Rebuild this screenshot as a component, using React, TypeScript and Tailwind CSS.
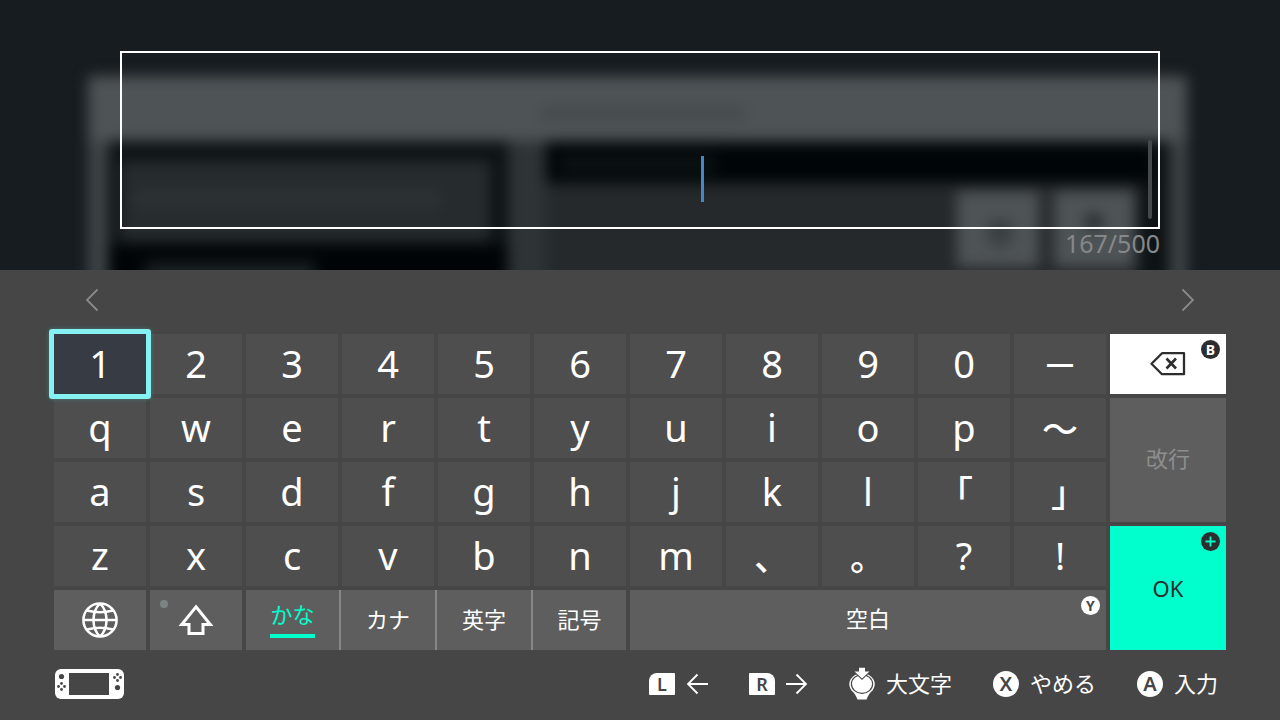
import type { ReactNode } from 'react';

interface KeyDef {
  label: string;
  wide?: boolean;
  bracket?: boolean;
}

const wide = (label: string): KeyDef => ({ label, wide: true });
const bracket = (label: string): KeyDef => ({ label, wide: true, bracket: true });
const plain = (chars: string): KeyDef[] => [...chars].map((label) => ({ label }));

const ROWS: KeyDef[][] = [
  [...plain('1234567890'), wide('－')],
  [...plain('qwertyuiop'), wide('～')],
  [...plain('asdfghjkl'), bracket('「'), bracket('」')],
  [...plain('zxcvbnm'), wide('、'), wide('。'), ...plain('?!')],
];

const MODES = ['かな', 'カナ', '英字', '記号'];

export default function App() {
  return (
    <div className="flex min-h-screen flex-col bg-[#464646] font-['Noto_Sans','Noto_Sans_CJK_JP',sans-serif] text-white">
      <TextArea />
      <Candidates />
      <Keyboard />
      <Footer />
    </div>
  );
}

function TextArea() {
  return (
    <header className="relative h-[270px] overflow-hidden bg-[#171c20] px-[120px] pt-[51px]">
      <Backdrop />
      <div className="relative">
        <textarea
          aria-label="テキスト"
          className="block h-[178px] w-full resize-none border-2 border-white bg-transparent p-4 text-[32px] caret-transparent outline-none"
        />
        <span className="absolute top-[105px] left-[581px] h-[46px] w-[3px] bg-[#4489c4]" />
        <span className="absolute top-[89px] right-2 h-[79px] w-1 rounded-full bg-[#46494b]" />
        <p className="text-right text-[25px] leading-7 text-[#85888a]">167/500</p>
      </div>
    </header>
  );
}

// Dimmed, out-of-focus screen behind the input box
function Backdrop() {
  return (
    <svg
      className="absolute inset-0 h-full w-full"
      viewBox="0 0 1280 270"
      preserveAspectRatio="none"
      aria-hidden="true"
    >
      <defs>
        <filter id="soft" x="-10%" y="-10%" width="120%" height="120%" colorInterpolationFilters="sRGB">
          <feGaussianBlur stdDeviation="7" />
        </filter>
      </defs>
      <g filter="url(#soft)">
        <rect x="88" y="76" width="1099" height="240" fill="#404548" />
        <rect x="88" y="76" width="1099" height="66" rx="4" fill="#4e5356" />
        <rect x="540" y="106" width="205" height="15" fill="#464b4e" />
        <rect x="108" y="141" width="1062" height="170" fill="#0d1215" />
        <rect x="120" y="161" width="370" height="80" fill="#262b2e" />
        <rect x="134" y="188" width="306" height="22" fill="#2c3134" />
        <rect x="108" y="245" width="400" height="60" fill="#000407" />
        <rect x="145" y="262" width="170" height="20" fill="#1b2023" />
        <rect x="508" y="141" width="38" height="170" fill="#2e3336" />
        <rect x="546" y="143" width="606" height="40" fill="#000508" />
        <rect x="560" y="154" width="155" height="20" fill="#0b1013" />
        <rect x="546" y="183" width="594" height="120" fill="#25292c" />
        <rect x="957" y="191" width="82" height="76" fill="#4e5356" />
        <rect x="1054" y="191" width="80" height="76" fill="#4e5356" />
        <circle cx="1000" cy="233" r="14" fill="#3a3f42" />
        <circle cx="1094" cy="222" r="9" fill="#262b2e" />
      </g>
    </svg>
  );
}

function Candidates() {
  return (
    <div className="flex h-16 items-start justify-between px-[82px] pt-[18px] text-[#8a8a8a]">
      <button type="button" aria-label="前の候補">
        <svg width="20" height="24" viewBox="0 0 20 24" fill="none" stroke="currentColor" strokeWidth="1.800">
          <path d="M15.500 1.500 5 12 15.500 22.500" />
        </svg>
      </button>
      <button type="button" aria-label="次の候補">
        <svg width="20" height="24" viewBox="0 0 20 24" fill="none" stroke="currentColor" strokeWidth="1.800">
          <path d="M4.500 1.500 15 12 4.500 22.500" />
        </svg>
      </button>
    </div>
  );
}

function Keyboard() {
  return (
    <main className="grid grid-cols-[repeat(11,92fr)_116fr] grid-rows-[repeat(5,60px)] gap-1 px-[54px]">
      {ROWS.map((row, i) => (
        <div key={i} className="col-span-11 col-start-1 grid grid-cols-subgrid">
          {row.map((k) => (
            <CharKey key={k.label} def={k} selected={k.label === '1'} />
          ))}
        </div>
      ))}

      <button
        type="button"
        aria-label="削除"
        className="relative col-start-12 row-start-1 flex items-center justify-center bg-white text-[#2d2d2d]"
      >
        <svg width="36" height="24" viewBox="0 0 36 24" fill="none" stroke="currentColor" strokeWidth="2.300" strokeLinejoin="round">
          <path d="M12 1.200H34V22.200H12L1.500 11.700Z" />
          <path d="M16.500 6.500 26 16.500M26 6.500 16.500 16.500" strokeWidth="2.600" />
        </svg>
        <Badge className="bg-[#2d2d2d] text-white">B</Badge>
      </button>
      <button
        type="button"
        disabled
        className="col-start-12 row-span-2 row-start-2 bg-[#5e5e5e] pb-[3px] text-[22px] text-[#8e8e8e]"
      >
        改行
      </button>
      <button
        type="button"
        className="relative col-start-12 row-span-2 row-start-4 bg-[#00ffcc] text-[22px] text-[#2d2d2d]"
      >
        OK
        <Badge className="bg-[#2d2d2d] text-[#00ffcc]">
          <svg width="11" height="11" viewBox="0 0 11 11" stroke="currentColor" strokeWidth="1.800">
            <path d="M5.500 .5V10.500M.5 5.500H10.500" />
          </svg>
        </Badge>
      </button>

      <button
        type="button"
        aria-label="言語"
        className="col-start-1 row-start-5 flex items-center justify-center bg-[#5e5e5e]"
      >
        <GlobeIcon />
      </button>
      <button
        type="button"
        aria-label="シフト"
        className="relative col-start-2 row-start-5 flex items-center justify-center bg-[#5e5e5e]"
      >
        <span className="absolute top-[10px] left-[10px] size-2 rounded-full bg-[#7a8583]" />
        <svg width="36" height="32" viewBox="0 0 36 32" fill="none" stroke="currentColor" strokeWidth="3">
          <path d="M18 2.800 32.300 20.500H25V29.500H11V20.500H3.700Z" />
        </svg>
      </button>
      <div className="col-span-4 col-start-3 row-start-5 grid grid-cols-[95fr_96fr_96fr_93fr] bg-[#5e5e5e]">
        {MODES.map((mode, i) => (
          <button
            key={mode}
            type="button"
            className={`flex items-center justify-center text-[22px] leading-6 ${
              i < MODES.length - 1 ? 'border-r-2 border-[#868686]' : ''
            } ${i > 0 ? 'pb-[3px]' : ''}`}
          >
            {i === 0 ? (
              <span className="border-b-4 border-[#00ffcc] pb-2 text-[#00ffcc]">{mode}</span>
            ) : (
              mode
            )}
          </button>
        ))}
      </div>
      <button
        type="button"
        className="relative col-span-5 col-start-7 row-start-5 bg-[#5e5e5e] pb-[3px] text-[22px]"
      >
        空白
        <Badge className="bg-white text-[#4a4a4a]">Y</Badge>
      </button>
    </main>
  );
}

function CharKey({ def, selected }: { def: KeyDef; selected: boolean }) {
  return (
    <button
      type="button"
      className={`flex items-center justify-center pb-[3px] leading-none ${
        selected ? 'relative z-10 bg-[#373b43]' : 'bg-[#4e4e4e]'
      } ${def.wide ? "font-['Noto_Sans_CJK_JP',sans-serif] text-[36px] font-medium" : 'text-[38px]'} ${
        def.bracket ? "[font-feature-settings:'halt']" : ''
      }`}
    >
      {def.label}
      {selected && (
        <span className="absolute -inset-[5px] rounded-[3px] border-[5px] border-[#84f1f3] shadow-[0_0_5px_#4fb9bd60]" />
      )}
    </button>
  );
}

function Badge({ className, children }: { className: string; children: ReactNode }) {
  return (
    <span
      className={`absolute top-[6px] right-[6px] flex size-[19px] items-center justify-center rounded-full text-[14px] leading-none font-bold ${className}`}
    >
      {children}
    </span>
  );
}

function GlobeIcon() {
  return (
    <svg width="36" height="36" viewBox="0 0 36 36" fill="none" stroke="currentColor" strokeWidth="2.500">
      <circle cx="18" cy="18" r="16.600" />
      <path d="M18 1.300C9.300 10 9.300 26 18 34.700M18 1.300C26.700 10 26.700 26 18 34.700" />
      <path d="M1 18H35M5 8.500Q18 12 31 8.500M5 27.500Q18 24 31 27.500" />
    </svg>
  );
}

function Footer() {
  return (
    <footer className="flex h-[70px] items-center justify-between pr-[62px] pb-[2px] pl-[55px]">
      <svg width="69" height="30" viewBox="0 0 69 30" fill="#464646" role="img" aria-label="コントローラー">
        <rect width="69" height="30" rx="6" fill="#fff" />
        <rect x="14" y="4" width="40" height="22" />
        <circle cx="6.500" cy="7.500" r="2.600" />
        <DotCross x={6.5} y={17.5} />
        <DotCross x={62.5} y={8.5} />
        <circle cx="62.500" cy="18.500" r="2.600" />
      </svg>
      <div className="flex items-center gap-[41px] text-[22px] leading-6">
        <Action icon={<span className={`${SHOULDER} rounded-tl-[8px]`}>L</span>} name="左へ">
          <ArrowIcon d="M22 11H2M11.500 1.500 2 11 11.500 20.500" />
        </Action>
        <Action icon={<span className={`${SHOULDER} rounded-tr-[8px]`}>R</span>} name="右へ">
          <ArrowIcon d="M0 11H20M10.500 1.500 20 11 10.500 20.500" />
        </Action>
        <Action icon={<StickIcon />}>大文字</Action>
        <Action icon={<span className={ROUND}>X</span>}>やめる</Action>
        <Action icon={<span className={ROUND}>A</span>}>入力</Action>
      </div>
    </footer>
  );
}

const SHOULDER =
  'flex h-[22px] w-[26px] items-center justify-center rounded-[1px] bg-white text-[18px] leading-none font-semibold text-[#464646]';
const ROUND =
  'flex size-[26px] items-center justify-center rounded-full bg-white text-[20px] leading-none font-semibold text-[#464646]';

function Action({ icon, name, children }: { icon: ReactNode; name?: string; children: ReactNode }) {
  return (
    <button type="button" aria-label={name} className="flex items-center gap-[11px]">
      {icon}
      {name ? children : <span className="pb-[2px]">{children}</span>}
    </button>
  );
}

function ArrowIcon({ d }: { d: string }) {
  return (
    <svg width="22" height="22" viewBox="0 0 22 22" fill="none" stroke="currentColor" strokeWidth="1.800">
      <path d={d} />
    </svg>
  );
}

function DotCross({ x, y }: { x: number; y: number }) {
  return (
    <g>
      <circle cx={x - 3} cy={y} r="1.400" />
      <circle cx={x + 3} cy={y} r="1.400" />
      <circle cx={x} cy={y - 3} r="1.400" />
      <circle cx={x} cy={y + 3} r="1.400" />
    </g>
  );
}

// Stick pressed straight down
function StickIcon() {
  return (
    <svg width="26" height="34" viewBox="0 0 26 34" fill="#fff">
      <ellipse cx="13" cy="17.300" rx="12.700" ry="11" />
      <path d="M4.500 25H21.500L18.800 29.500 17.500 32.500H8.500L7.200 29.500Z" />
      <ellipse cx="13" cy="17" rx="10.600" ry="9.400" fill="none" stroke="#464646" strokeWidth="1.200" />
      <path d="M9.500 0V4.200H4L13 12.900 22 4.200H16.500V0Z" fill="#464646" />
      <path d="M10 .8H16V4.600H20.500L13 11.600 5.500 4.600H10Z" />
    </svg>
  );
}
